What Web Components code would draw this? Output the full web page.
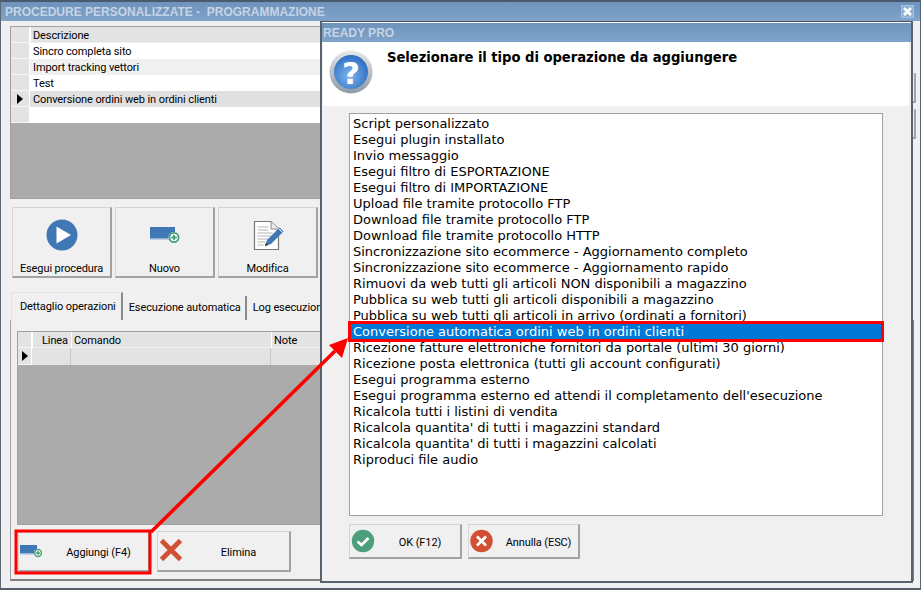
<!DOCTYPE html>
<html>
<head>
<meta charset="utf-8">
<title>Procedure personalizzate</title>
<style>
  html, body { margin: 0; padding: 0; background: #f0f0f0; }
  body { width: 921px; height: 590px; overflow: hidden; position: relative; font-family: "Liberation Sans", sans-serif; color: #000; }
</style>
</head>
<body>

<template id="icon-set">
  <svg data-icon="play" width="32" height="32" viewBox="0 0 32 32"><circle cx="16" cy="16" r="15.5" fill="#3f78b4"/><path d="M10.5 7.5 L25 16 L10.5 24.5 Z" fill="#fff"/></svg>
  <svg data-icon="add" width="32" height="18" viewBox="0 0 32 18"><rect x="1" y="1" width="25" height="12" fill="#3f78b4"/><rect x="1" y="12" width="25" height="1.5" fill="#8fb0d2"/><circle cx="25" cy="11.5" r="5.5" fill="#fff"/><circle cx="25" cy="11.5" r="4.6" fill="none" stroke="#4b9f7c" stroke-width="1.8"/><path d="M25 8.7v5.6M22.2 11.5h5.6" stroke="#4b9f7c" stroke-width="1.8"/></svg>
  <svg data-icon="add-small" width="24" height="14" viewBox="0 1 24 14"><rect x="0" y="1" width="17" height="8.5" fill="#3f78b4"/><rect x="0" y="9.5" width="17" height="1" fill="#9dbad8"/><circle cx="18" cy="9" r="4.2" fill="#fff"/><circle cx="18" cy="9" r="3.4" fill="none" stroke="#4b9f7c" stroke-width="1.5"/><path d="M18 7v4M16 9h4" stroke="#4b9f7c" stroke-width="1.4"/></svg>
  <svg data-icon="edit" width="32" height="32" viewBox="-1 0 32 32"><path d="M1.5 2.5H18L25.5 10V30.5H1.5Z" fill="#fff" stroke="#777" stroke-width="1.2"/><path d="M18 2.5V10H25.5" fill="#eee" stroke="#888"/><path d="M4.5 8h11M4.5 11h11M4.5 14h15M4.5 17h14M4.5 20h11M4.5 23h8M4.5 26h6" stroke="#b5b5b5" stroke-width="1.2"/><path d="M12 27 L14 21 L26.5 8.5 L30.5 12.5 L18 25Z" fill="#3f78b4"/><path d="M12 27l1-3.2 2.2 2.2z" fill="#333"/><path d="M25.5 9.5l4 4" stroke="#fff" stroke-width="1"/></svg>
  <svg data-icon="delete" width="24" height="24" viewBox="0 1 24 24"><path d="M2.5 2.5L21.5 21.5M21.5 2.5L2.5 21.5" stroke="#d14f33" stroke-width="4.8"/></svg>
  <svg data-icon="ok" width="24" height="24" viewBox="0 0 24 24"><circle cx="12" cy="12" r="11.2" fill="#4d9f7c"/><path d="M6.5 12.5L10.5 16L17.5 9" fill="none" stroke="#fff" stroke-width="2.6"/></svg>
  <svg data-icon="cancel" width="24" height="24" viewBox="0 0 24 24"><circle cx="11.5" cy="12" r="11.2" fill="#d14f33"/><path d="M7 7.5L16 16.5M16 7.5L7 16.5" stroke="#fff" stroke-width="2.6"/></svg>
</template>

<app-window title-text="PROCEDURE PERSONALIZZATE -  PROGRAMMAZIONE">
  <div style="display:flex; gap:0; padding:5px 4px 0 9px; height:266px; box-sizing:border-box;">
    <div style="flex:1; min-width:0;">
      <data-grid style="height:173px" columns="Descrizione:auto" selected="3"
        rows="Sincro completa sito|Import tracking vettori|Test|Conversione ordini web in ordini clienti|"></data-grid>
      <div style="display:flex; gap:3px; margin:8px 0 0 2px;">
        <tool-button icon="play" label="Esegui procedura"></tool-button>
        <tool-button icon="add" label="Nuovo"></tool-button>
        <tool-button icon="edit" label="Modifica"></tool-button>
      </div>
    </div>
    <div style="display:flex; flex-direction:column; gap:6px; padding-top:47px;">
      <side-button></side-button>
      <side-button></side-button>
    </div>
  </div>
  <tab-strip>
    <button slot="tab" class="active">Dettaglio operazioni</button>
    <button slot="tab">Esecuzione automatica</button>
    <button slot="tab">Log esecuzione</button>
    <div style="padding:11px 0 0 6px;">
      <data-grid style="height:194px; margin-right:20px" columns="Linea:39:r|Comando:200|Note:auto" new-row></data-grid>
      <div style="display:flex; gap:7px; margin:7px 0 0 1px;">
        <wide-button icon="add-small" label="Aggiungi (F4)" style="width:132px; height:40px"></wide-button>
        <wide-button icon="delete" label="Elimina" style="width:134px; height:41px; margin-top:-1px"></wide-button>
      </div>
    </div>
  </tab-strip>
</app-window>

<dialog-window title-text="READY PRO" heading="Selezionare il tipo di operazione da aggiungere">
  <option-list selected="13">
    <div>Script personalizzato</div>
    <div>Esegui plugin installato</div>
    <div>Invio messaggio</div>
    <div>Esegui filtro di ESPORTAZIONE</div>
    <div>Esegui filtro di IMPORTAZIONE</div>
    <div>Upload file tramite protocollo FTP</div>
    <div>Download file tramite protocollo FTP</div>
    <div>Download file tramite protocollo HTTP</div>
    <div>Sincronizzazione sito ecommerce - Aggiornamento completo</div>
    <div>Sincronizzazione sito ecommerce - Aggiornamento rapido</div>
    <div>Rimuovi da web tutti gli articoli NON disponibili a magazzino</div>
    <div>Pubblica su web tutti gli articoli disponibili a magazzino</div>
    <div>Pubblica su web tutti gli articoli in arrivo (ordinati a fornitori)</div>
    <div>Conversione automatica ordini web in ordini clienti</div>
    <div>Ricezione fatture elettroniche fornitori da portale (ultimi 30 giorni)</div>
    <div>Ricezione posta elettronica (tutti gli account configurati)</div>
    <div>Esegui programma esterno</div>
    <div>Esegui programma esterno ed attendi il completamento dell'esecuzione</div>
    <div>Ricalcola tutti i listini di vendita</div>
    <div>Ricalcola quantita' di tutti i magazzini standard</div>
    <div>Ricalcola quantita' di tutti i magazzini calcolati</div>
    <div>Riproduci file audio</div>
  </option-list>
  <wide-button slot="actions" icon="ok" label="OK (F12)" style="width:113px; height:35px"></wide-button>
  <wide-button slot="actions" icon="cancel" label="Annulla (ESC)" style="width:112px; height:35px"></wide-button>
</dialog-window>

<annotation-layer></annotation-layer>

<script>
const UI_FONT = `Roboto, "Liberation Sans", sans-serif`;
const TITLE_FONT = `"Liberation Sans", sans-serif`;

function iconMarkup(name) {
  const tpl = document.getElementById("icon-set");
  const svg = tpl.content.querySelector(`[data-icon="${name}"]`);
  return svg ? svg.outerHTML : "";
}

class AppWindow extends HTMLElement {
  connectedCallback() {
    this.attachShadow({ mode: "open" });
    this.shadowRoot.innerHTML = `
      <style>
        :host { display: flex; flex-direction: column; width: 921px; height: 590px; box-sizing: border-box;
                background: #f0f0f0; border: 1px solid #5a6672; border-top: 2px solid #4a5a6c; border-bottom: 2px solid #56616c; }
        header { height: 19px; flex: none; display: flex; align-items: center; justify-content: space-between;
                 padding: 0 4px; background: linear-gradient(#6e93bc, #80a3c9);
                 color: #c6d4e4; font: bold 12px ${TITLE_FONT}; white-space: pre; }
        .close { width: 11px; height: 11px; background: #8fb0d4; border: 1px solid #a8c2de; margin-right: 2px; }
        .close svg { display: block; }
      </style>
      <header><span>${this.getAttribute("title-text")}</span>
        <span class="close"><svg width="11" height="11" viewBox="0 0 11 11"><path d="M2 2L9 9M9 2L2 9" stroke="#fff" stroke-width="2.6"/></svg></span>
      </header>
      <slot></slot>`;
  }
}

class DataGrid extends HTMLElement {
  connectedCallback() {
    this.attachShadow({ mode: "open" });
    const cols = this.getAttribute("columns").split("|").map(c => {
      const [name, width, align] = c.split(":");
      return { name, width, align };
    });
    const hasRows = this.hasAttribute("rows");
    const selected = Number(this.getAttribute("selected"));
    const rows = hasRows ? this.getAttribute("rows").split("|") : [];
    const gridCols = (hasRows ? "19px " : "14px ") + cols.map(c => c.width === "auto" ? "1fr" : c.width + "px").join(" ");
    let body = "";
    rows.forEach((text, i) => {
      const cls = i === selected ? "sel" : i % 2 ? "alt" : "";
      body += `<div class="row ${cls}"><span class="ind">${i === selected ? '<i class="arrow"></i>' : ""}</span><span class="cell">${text}</span></div>`;
    });
    if (this.hasAttribute("new-row")) {
      body += `<div class="row new"><span class="ind"><i class="arrow"></i></span>${cols.map(() => `<span class="cell"></span>`).join("")}</div>`;
    }
    this.shadowRoot.innerHTML = `
      <style>
        :host { display: block; box-sizing: border-box; background: #ababab; border: 1px solid #a0a0a0; border-right: 0; overflow: hidden;
                font: 11px ${UI_FONT}; letter-spacing: -0.1px; }
        .row { display: grid; grid-template-columns: ${gridCols}; height: 16px; line-height: 15px; background: #fff; }
        .head { background: #e3e3e3; }
        .alt { background: #f0f0f0; }
        .sel { background: #e0e0e0; }
        .new { background: #e3e3e3; height: 17px; }
        .ind { background: #e3e3e3; border-right: 1px solid #fff; border-bottom: 1px solid #f5f5f5; box-sizing: border-box; position: relative; }
        .cell, .col { padding: 1px 2px 0 3px; white-space: nowrap; overflow: hidden; box-sizing: border-box; }
        .col { padding-left: 2px; border-left: 1px solid #fff; border-bottom: 1px solid #f0f0f0; }
        .col.r { text-align: right; padding-right: 3px; }
        .new .cell { border-right: 1px solid #c8c8c8; }
        .arrow { position: absolute; left: 50%; top: 3px; margin-left: -3px; width: 0; height: 0;
                 border-left: 6px solid #000; border-top: 5px solid transparent; border-bottom: 5px solid transparent; }
      </style>
      <div class="row head"><span class="ind"></span>${cols.map(c => `<span class="col ${c.align || ""}">${c.name}</span>`).join("")}</div>
      ${body}`;
  }
}

class ToolButton extends HTMLElement {
  connectedCallback() {
    this.attachShadow({ mode: "open" });
    this.shadowRoot.innerHTML = `
      <style>
        :host { display: flex; flex-direction: column; align-items: center; box-sizing: border-box; width: 100px; height: 71px; flex: none;
                border: 1px solid #d4d4d4; border-right: 2px solid #a3a3a3; border-bottom: 2px solid #a3a3a3; font: 11px ${UI_FONT}; letter-spacing: -0.1px; }
        .ico { height: 53px; display: flex; align-items: center; justify-content: center; }
        .lbl { line-height: 14px; padding-top: 1px; }
        svg { display: block; }
      </style>
      <div class="ico">${iconMarkup(this.getAttribute("icon"))}</div>
      <div class="lbl">${this.getAttribute("label")}</div>`;
  }
}

class WideButton extends HTMLElement {
  connectedCallback() {
    this.attachShadow({ mode: "open" });
    this.shadowRoot.innerHTML = `
      <style>
        :host { display: flex; align-items: center; box-sizing: border-box; flex: none; padding-left: 1px;
                border: 1px solid #d4d4d4; border-right: 2px solid #a3a3a3; border-bottom: 2px solid #a3a3a3; font: 11px ${UI_FONT}; letter-spacing: -0.1px; }
        .lbl { flex: 1; text-align: center; padding: 2px 0 0 5px; }
        svg { display: block; flex: none; }
      </style>
      ${iconMarkup(this.getAttribute("icon"))}
      <span class="lbl">${this.getAttribute("label")}</span>`;
  }
}

class SideButton extends HTMLElement {
  connectedCallback() {
    this.attachShadow({ mode: "open" });
    this.shadowRoot.innerHTML = `
      <style>
        :host { display: block; width: 40px; height: 30px; box-sizing: border-box;
                border: 1px solid #d4d4d4; border-right: 2px solid #a3a3a3; border-bottom: 2px solid #a3a3a3; }
      </style>`;
  }
}

class TabStrip extends HTMLElement {
  connectedCallback() {
    this.attachShadow({ mode: "open" });
    this.shadowRoot.innerHTML = `
      <style>
        :host { display: flex; flex-direction: column; flex: 1; min-height: 0; margin: 5px 6px 7px 9px; font: 11px ${UI_FONT}; }
        nav { display: flex; height: 28px; flex: none; padding-left: 1px; }
        ::slotted(button[slot="tab"]) { all: unset; box-sizing: border-box; font: 11px ${UI_FONT}; letter-spacing: -0.1px; height: 24px; margin-top: 4px;
                padding: 0 4px 0 6px; line-height: 24px; white-space: nowrap; border-right: 2px solid #8c8c8c; }
        ::slotted(button[slot="tab"].active) { height: 28px; margin-top: 0; padding: 0 5px 0 8px; line-height: 28px;
                border-left: 1px solid #e4e4e4; border-top: 1px solid #e4e4e4; }
        .page { flex: 1; min-height: 0; border-left: 1px solid #a0a0a0; border-right: 2px solid #7e7e7e; border-bottom: 2px solid #7e7e7e; }
      </style>
      <nav><slot name="tab"></slot></nav>
      <div class="page"><slot></slot></div>`;
  }
}

class DialogWindow extends HTMLElement {
  connectedCallback() {
    this.attachShadow({ mode: "open" });
    this.shadowRoot.innerHTML = `
      <style>
        :host { position: absolute; left: 320px; top: 21px; width: 593px; height: 562px; box-sizing: border-box; display: flex; flex-direction: column;
                background: #f0f0f0; border: 2px solid #56626e; border-top-width: 1px; border-top-color: #46525f; }
        header { height: 19px; flex: none; display: flex; align-items: center; padding: 0 1px; background: linear-gradient(#6e93bc, #80a3c9);
                 border-top: 1px solid #fff; color: #c6d4e4; font: bold 12px ${TITLE_FONT}; }
        .head { height: 64px; flex: none; margin: 0 2px 0 1px; background: #fff; display: flex; box-sizing: border-box; padding: 7px 0 0 6px; gap: 14px; }
        .head svg { display: block; margin-top: 1px; }
        h1 { margin: 1px 0 0; font: bold 13.2px "DejaVu Sans", sans-serif; letter-spacing: -0.05px; white-space: nowrap; }
        .body { flex: 1; padding: 7px 27px 0 27px; }
        .actions { display: flex; gap: 6px; padding: 0 0 22px 27px; }
      </style>
      <header>${this.getAttribute("title-text")}</header>
      <div class="head">
        <svg width="44" height="44" viewBox="0 0 44 44">
          <defs>
            <linearGradient id="ring" x1="0" y1="0" x2="0" y2="1"><stop offset="0" stop-color="#e8e8e8"/><stop offset="1" stop-color="#8e9aa6"/></linearGradient>
            <radialGradient id="ball" cx="0.45" cy="0.6" r="0.6"><stop offset="0" stop-color="#7fb6ee"/><stop offset="1" stop-color="#2d6fc2"/></radialGradient>
          </defs>
          <circle cx="22" cy="22" r="21.5" fill="url(#ring)"/>
          <circle cx="22" cy="22" r="17" fill="url(#ball)"/>
          <text x="22" y="33.5" text-anchor="middle" font-family="DejaVu Sans" font-weight="bold" font-size="31" fill="#fff">?</text>
        </svg>
        <h1>${this.getAttribute("heading")}</h1>
      </div>
      <div class="body"><slot></slot></div>
      <div class="actions"><slot name="actions"></slot></div>`;
  }
}

class OptionList extends HTMLElement {
  connectedCallback() {
    this.attachShadow({ mode: "open" });
    this.shadowRoot.innerHTML = `
      <style>
        :host { display: block; box-sizing: border-box; width: 534px; height: 403px; background: #fff; padding: 2px 1px 0 1px;
                border: 1px solid #a0a0a0; font: 13px "DejaVu Sans", sans-serif; }
        ::slotted(div) { height: 16px; line-height: 16px; padding-left: 2px; white-space: nowrap; }
        ::slotted(div.selected) { background: #0078d7; color: #fff; }
      </style>
      <slot></slot>`;
    const n = Number(this.getAttribute("selected"));
    this.children[n].classList.add("selected");
  }
}

class AnnotationLayer extends HTMLElement {
  connectedCallback() {
    this.attachShadow({ mode: "open" });
    this.shadowRoot.innerHTML = `
      <style>
        :host { position: absolute; left: 0; top: 0; width: 921px; height: 590px; pointer-events: none; }
        svg { display: block; }
      </style>
      <svg width="921" height="590" viewBox="0 0 921 590">
        <rect x="16" y="531" width="134" height="42" fill="none" stroke="#f00" stroke-width="3"/>
        <rect x="349.5" y="322.5" width="533" height="18" fill="none" stroke="#f00" stroke-width="3"/>
        <path d="M151 532 L335 351" stroke="#f00" stroke-width="3.6" fill="none"/>
        <path d="M348 338 L329 345 L342 358 Z" fill="#f00"/>
      </svg>`;
  }
}

customElements.define("app-window", AppWindow);
customElements.define("data-grid", DataGrid);
customElements.define("tool-button", ToolButton);
customElements.define("wide-button", WideButton);
customElements.define("side-button", SideButton);
customElements.define("tab-strip", TabStrip);
customElements.define("dialog-window", DialogWindow);
customElements.define("option-list", OptionList);
customElements.define("annotation-layer", AnnotationLayer);
</script>
</body>
</html>
